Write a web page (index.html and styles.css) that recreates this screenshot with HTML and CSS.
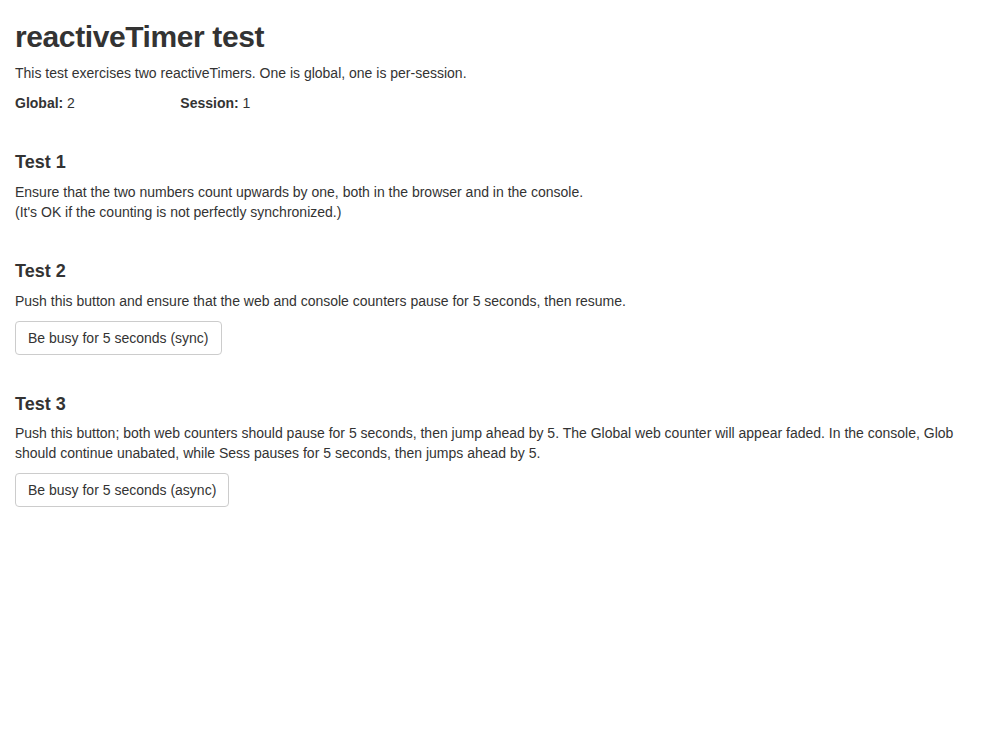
FILE: index.html
```html
<!DOCTYPE html>
<html lang="en">
<head>
<meta charset="utf-8">
<title>reactiveTimer test</title>
<link rel="stylesheet" href="styles.css">
</head>
<body>
<div class="container">
  <h2 class="title">reactiveTimer test</h2>
  <p>This test exercises two reactiveTimers. One is global, one is per-session.</p>
  <div class="row">
    <div class="col"><strong>Global:</strong> 2</div>
    <div class="col"><strong>Session:</strong> 1</div>
  </div>

  <div class="test">
    <h4>Test 1</h4>
    <p>Ensure that the two numbers count upwards by one, both in the browser and in the console.<br>(It's OK if the counting is not perfectly synchronized.)</p>
  </div>

  <div class="test">
    <h4>Test 2</h4>
    <p>Push this button and ensure that the web and console counters pause for 5 seconds, then resume.</p>
    <button class="btn" type="button">Be busy for 5 seconds (sync)</button>
  </div>

  <div class="test">
    <h4>Test 3</h4>
    <p>Push this button; both web counters should pause for 5 seconds, then jump ahead by 5. The Global web counter will appear faded. In the console, Glob should continue unabated, while Sess pauses for 5 seconds, then jumps ahead by 5.</p>
    <button class="btn" type="button">Be busy for 5 seconds (async)</button>
  </div>
</div>
</body>
</html>
```

FILE: styles.css
```css
html, body {
  margin: 0;
  padding: 0;
  background: #fff;
}
body {
  font-family: "Liberation Sans", Arial, Helvetica, sans-serif;
  font-size: 14px;
  line-height: 1.42857143;
  color: #333;
}
.container {
  padding: 0 15px;
}
.title {
  font-size: 30px;
  font-weight: 700;
  line-height: 1.1;
  letter-spacing: -0.4px;
  margin: 20px 0 10px;
}
p {
  margin: 0 0 10px;
}
.row {
  display: flex;
  margin: 0 -15px;
}
.col {
  width: 16.66666667%;
  padding: 0 15px;
  box-sizing: border-box;
}
.test {
  margin-top: 40px;
}
.test h4 {
  font-size: 18px;
  font-weight: 700;
  line-height: 1.1;
  margin: 0 0 9px;
}
.btn {
  display: inline-block;
  font-family: inherit;
  font-size: 14px;
  line-height: 1.42857143;
  color: #333;
  background: #fff;
  border: 1px solid #ccc;
  border-radius: 4px;
  padding: 6px 12px;
  margin: 0;
  vertical-align: middle;
  cursor: pointer;
}
```
